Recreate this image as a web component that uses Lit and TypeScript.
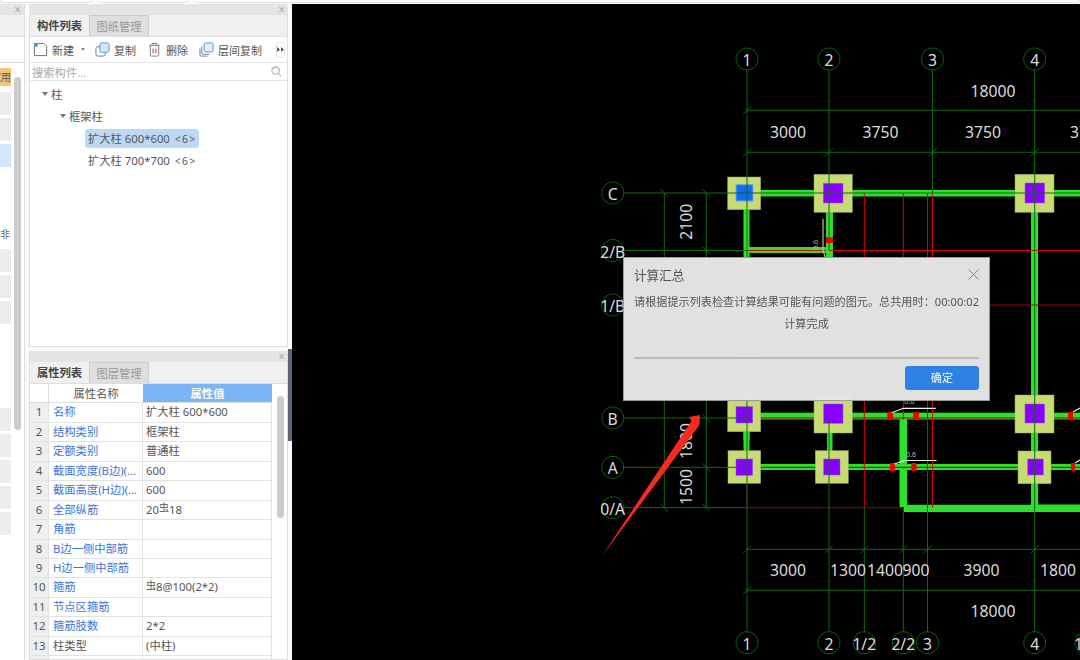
import { html, css, svg, LitElement } from "lit";
import { customElement } from "lit/decorators.js";

type Prop = { no: number, name: string, value: string, plain?: boolean };

const PROPS: Prop[] = [
  { no: 1, name: "名称", value: "扩大柱 600*600" },
  { no: 2, name: "结构类别", value: "框架柱" },
  { no: 3, name: "定额类别", value: "普通柱" },
  { no: 4, name: "截面宽度(B边)(mm)", value: "600" },
  { no: 5, name: "截面高度(H边)(mm)", value: "600" },
  { no: 6, name: "全部纵筋", value: "20|18" },
  { no: 7, name: "角筋", value: "" },
  { no: 8, name: "B边一侧中部筋", value: "" },
  { no: 9, name: "H边一侧中部筋", value: "" },
  { no: 10, name: "箍筋", value: "|8@100(2*2)" },
  { no: 11, name: "节点区箍筋", value: "" },
  { no: 12, name: "箍筋肢数", value: "2*2" },
  { no: 13, name: "柱类型", value: "(中柱)", plain: true },
  { no: 14, name: "", value: "" },
];

// grid positions, in page pixels (the svg viewBox uses the same numbers)
const X1 = 747, X2 = 829, X12 = 864.3, X22 = 903.3, X3L = 927.5, X3 = 932.5, X4 = 1034.7;
const YC = 193, Y2B = 250.5, Y1B = 305, YB = 418, YA = 467.3, Y0A = 507.7;

const bubble = (x: number, y: number, label: string) => {
  const pts = Array.from({ length: 12 }, (_, i) => {
    const a = (i * Math.PI) / 6 + Math.PI / 12;
    return `${x + 11.2 * Math.cos(a)},${y + 11.2 * Math.sin(a)}`;
  }).join(" ");
  return svg`<polygon class="bubble" points=${pts}></polygon><text class="dim" x=${x} y=${y + 1}>${label}</text>`;
};

const line = (cls: string, x1: number, y1: number, x2: number, y2: number) =>
  svg`<line class=${cls} x1=${x1} y1=${y1} x2=${x2} y2=${y2}></line>`;

const rect = (cls: string, x1: number, y1: number, x2: number, y2: number) =>
  svg`<rect class=${cls} x=${x1} y=${y1} width=${x2 - x1} height=${y2 - y1}></rect>`;

const tick = (x: number, y: number, back = false) =>
  back ? line("grid", x - 4, y - 4, x + 4, y + 4) : line("grid", x - 4, y + 4, x + 4, y - 4);

const label = (x: number, y: number, t: string) => svg`<text class="dim" x=${x} y=${y}>${t}</text>`;

const vlabel = (x: number, y: number, t: string) =>
  svg`<text class="dim" x=${x} y=${y} transform="rotate(-90 ${x} ${y})">${t}</text>`;

const column = (px1: number, py1: number, px2: number, py2: number, x1: number, y1: number, x2: number, y2: number, cls = "purple") =>
  svg`${rect("pale", px1, py1, px2, py2)}${rect(cls, x1, y1, x2, y2)}`;

const leader = (x1: number, y1: number, x2: number, y2: number, x3: number) =>
  svg`<polyline class="leader" points="${x1},${y1} ${x2},${y2} ${x3},${y2}"></polyline>
    <text class="tiny" x=${x2 + 6} y=${y2 - 4}>0.6</text>`;

function drawing() {
  return svg`
    <svg class="plan" viewBox="292 4 788 656" width="788" height="656">
      <!-- beams -->
      ${rect("beam", 750, 190, 1080, 196.5)}
      ${rect("beam", 743.5, 209, 749.5, 440)}
      ${rect("beam", 749, 247, 826, 253)}
      ${rect("beam", 826, 211, 833, 262)}
      ${rect("beam", 1031, 211, 1038, 510)}
      ${rect("beam", 827, 400, 832.5, 470)}
      ${rect("beam", 743.5, 420, 749.5, 470)}
      ${rect("beam", 750, 412.7, 1080, 419.5)}
      ${rect("beam", 750, 464, 1080, 470)}
      ${rect("beam", 899.5, 419, 907, 507)}
      ${rect("beam", 904, 504.5, 1080, 512)}
      ${rect("cut", 907, 470, 1031, 504.5)}

      <!-- red reference lines -->
      ${line("red", X2, Y2B, 1080, Y2B)}
      ${line("red-dim", 840, Y1B, 1080, Y1B)}
      ${line("red-dim", X1, YB, 1080, YB)}
      ${line("red-dim", X1, YA, 1080, YA)}
      ${line("red-dim", X1, Y0A, X22, Y0A)}
      ${line("red-dim", X1, YA, X1, Y0A)}
      ${line("red", X12, YC, X12, Y0A)}
      ${line("red", X22, YC, X22, 420)}
      ${line("red", X3L, YC, X3L, Y0A)}
      ${line("red", X3, YC, X3, Y0A)}
      ${line("red", X1, Y2B, 826, Y2B)}

      <!-- columns -->
      ${column(727.7, 177, 760.7, 209.7, 736, 184.7, 753, 201, "blue")}
      ${column(814, 174.3, 852.3, 212.3, 823.3, 183.3, 843, 203)}
      ${column(1015, 174.3, 1054, 212.3, 1025, 183, 1044.6, 203)}
      ${column(727.7, 399, 760.7, 431.7, 736, 406.7, 752.7, 423)}
      ${column(814, 395, 852.3, 433, 823.7, 404, 843, 423.3)}
      ${column(1015, 395, 1054, 433, 1025, 404, 1044.6, 423)}
      ${column(728, 450.7, 760.7, 483.3, 736, 459, 752.7, 475.3)}
      ${column(815.3, 450.7, 848.3, 483.3, 823.7, 459, 840, 475)}
      ${column(1018, 451, 1051, 483.7, 1027.7, 459, 1043.3, 475)}

      <!-- axes -->
      ${line("grid", X1, 70, X1, 632)}
      ${line("grid", X2, 70, X2, 250)}
      ${line("grid", X2, 420, X2, 632)}
      ${line("grid", X3, 70, X3, YC)}
      ${line("grid", X4, 70, X4, 632)}
      ${line("grid", X12, Y0A, X12, 632)}
      ${line("grid", X22, Y0A, X22, 632)}
      ${line("grid", X3L, Y0A, X3L, 632)}
      ${line("grid", 624, YC, 1080, YC)}
      ${line("grid", 624, Y2B, X1, Y2B)}
      ${line("grid", 624, Y1B, X1, Y1B)}
      ${line("grid", 624, YB, X1, YB)}
      ${line("grid", 624, YA, X1, YA)}
      ${line("grid", 624, Y0A, X1, Y0A)}
      ${line("grid", 664.3, YC, 664.3, Y0A)}
      ${line("grid", 706.3, YC, 706.3, Y0A)}
      ${line("grid", X1, 110.3, 1080, 110.3)}
      ${line("grid", X1, 152.3, 1080, 152.3)}
      ${line("grid", X1, 549.3, 1080, 549.3)}
      ${line("grid", X1, 590.3, 1080, 590.3)}
      ${tick(X1, 110.3)}
      ${[X1, X2, X3, X4].map((x) => tick(x, 152.3))}
      ${[X1, X2, X12, X22, X3L, X4].map((x) => tick(x, 549.3))}
      ${tick(X1, 590.3)}
      ${[YC, Y0A].map((y) => tick(664.3, y, true))}
      ${[YC, Y2B, YB, YA, Y0A].map((y) => tick(706.3, y, true))}

      <!-- steel markers -->
      ${rect("mark", 826, 237.3, 833, 243)}
      ${rect("mark", 887.3, 412, 893, 420)}
      ${rect("mark", 913.3, 412, 919, 420)}
      ${rect("mark", 890, 463, 895, 471)}
      ${rect("mark", 911.3, 463, 916.5, 471)}
      ${rect("mark", 1068, 412, 1073, 420)}
      ${rect("mark", 1071, 463, 1075, 471)}
      ${leader(891.7, 412.7, 903.3, 408.3, 935.7)}
      ${leader(894.3, 464, 905, 460.5, 936.5)}
      <polyline class="leader" points="1073,412 1080,408"></polyline>
      <polyline class="leader" points="1075,463 1080,460"></polyline>
      <polyline class="leader-grey" points="823,218.7 823,250 825,257"></polyline>
      <text class="tiny" x="818" y="245" transform="rotate(-90 818 245)">0.6</text>

      <!-- labels -->
      ${bubble(X1, 59, "1")}${bubble(X2, 59, "2")}${bubble(X3, 59, "3")}${bubble(X4, 59, "4")}
      ${bubble(612.7, YC, "C")}${bubble(612.7, Y2B, "2/B")}${bubble(612.7, Y1B, "1/B")}
      ${bubble(612.7, YB, "B")}${bubble(612.7, YA, "A")}${bubble(612.7, Y0A, "0/A")}
      ${bubble(X1, 642.7, "1")}${bubble(X2, 642.7, "2")}${bubble(X12, 642.7, "1/2")}
      ${bubble(X22, 642.7, "2/2")}${bubble(X3L, 642.7, "3")}${bubble(X4, 642.7, "4")}${bubble(1086, 642.7, "1/3")}
      ${label(993, 91, "18000")}
      ${label(788, 132, "3000")}${label(880.5, 132, "3750")}${label(983, 132, "3750")}${label(1088, 132, "3750")}
      ${label(788, 570, "3000")}${label(848, 570, "1300")}${label(885, 570, "1400")}${label(916, 570, "900")}
      ${label(981.5, 570, "3900")}${label(1058, 570, "1800")}
      ${label(993, 611, "18000")}
      ${vlabel(686, 221.7, "2100")}${vlabel(686, 441, "1800")}${vlabel(686, 487, "1500")}

      <polygon class="arrow" points="700,415 689,417 691.5,421 602,556 698,427 699.5,424"></polygon>
    </svg>
  `;
}

const icon_new = html`<svg class="ico" viewBox="0 0 16 16" width="15" height="15">
  <path d="M5 1.5h6.5l3 3v10h-13V5" fill="none" stroke="#666" stroke-width="1"/><rect x="1" y="1" width="4" height="4" fill="#4a90e2"/></svg>`;
const icon_copy = html`<svg class="ico" viewBox="0 0 16 16" width="15" height="15">
  <rect x="1" y="5" width="10" height="10" rx="2" fill="#fff" stroke="#777"/><rect x="5" y="1" width="10" height="10" rx="2" fill="#d6e8fb" stroke="#4a90e2"/></svg>`;
const icon_del = html`<svg class="ico" viewBox="0 0 16 16" width="15" height="15">
  <path d="M2.5 3.5h11M5.5 3.5v-2h5v2M3.5 3.5v10.5a1 1 0 0 0 1 1h7a1 1 0 0 0 1-1V3.5" fill="none" stroke="#777"/><path d="M6.5 7v5M9.5 7v5" stroke="#e5484d" stroke-width="1.2"/></svg>`;
const icon_floor = html`<svg class="ico" viewBox="0 0 16 16" width="15" height="15">
  <path d="M1 7v7a1 1 0 0 0 1 1h7M3 5v7a1 1 0 0 0 1 1h7" fill="none" stroke="#777"/><rect x="5.5" y="1" width="9.5" height="9.5" rx="1.5" fill="#e3effc" stroke="#4a90e2"/></svg>`;

@customElement("app-root")
export class AppRoot extends LitElement {
  static styles = css`
    :host {
      display: block;
      width: 1080px;
      height: 660px;
      overflow: hidden;
      font-family: "Noto Sans", "Noto Sans CJK SC", sans-serif;
      font-size: 11.3px;
      color: #555;
    }

    .top { height: 4px; background: #fff; display: flex; gap: 4px; }
    .top i { height: 2px; border: 1px solid #e2e2e2; border-top: 0; border-radius: 0 0 4px 4px; }
    .top i:nth-child(1) { width: 91px; }
    .top i:nth-child(2) { width: 90px; }
    .top i:nth-child(3) { width: 885px; }

    .main { height: 656px; display: flex; background: #fafafa; }

    .side { width: 25px; flex: none; box-sizing: border-box; border-right: 1px solid #ddd; background: #fff; position: relative; overflow: hidden; }
    .bar { height: 11px; background: #e4e4e4; display: flex; justify-content: flex-end; align-items: center; color: #aaa; font-size: 12px; line-height: 11px; }
    .side .bar { padding-right: 3px; }
    .side .tabs { height: 21px; background: #f0f0f0; border-bottom: 1px solid #ddd; }
    .side .tools { height: 25px; border-bottom: 1px solid #ddd; }
    .tiles { padding-top: 5px; display: flex; flex-direction: column; gap: 3px; width: 11px; }
    .tile { height: 23px; background: #ececec; flex: none; }
    .tile.on { height: 18px; margin-bottom: 3px; background: #f3c677; color: #555; font-size: 10px; line-height: 18px; display: flex; justify-content: flex-end; overflow: hidden; white-space: nowrap; }
    .tile.sel { background: #d2e6fc; }
    .clip { height: 12px; margin: 58px 0 6px; font-size: 10px; line-height: 12px; white-space: nowrap; overflow: hidden; color: #666; }
    .gap { height: 78px; flex: none; }
    .thumb { position: absolute; left: 14px; top: 73px; width: 7px; height: 353px; border-radius: 4px; background: #ccc; }

    .mid { width: 259px; margin: 0 4px; flex: none; display: flex; flex-direction: column; gap: 4px; position: relative; }
    .panel { box-sizing: border-box; border: 1px solid #ddd; border-top: 0; background: #fff; display: flex; flex-direction: column; }
    .panel.one { height: 343px; }
    .panel.two { height: 309px; overflow: hidden; position: relative; }
    .panel .bar { padding-right: 3px; margin: 0 -1px; }

    .tabs { display: flex; height: 21px; background: #f0f0f0; border-bottom: 1px solid #ddd; flex: none; }
    .tab { width: 59px; box-sizing: border-box; text-align: center; line-height: 21px; font-size: 11.3px; color: #444; font-weight: 700; }
    .tab.off { width: 60px; background: #dedede; color: #999; font-weight: 400; border: 1px solid #ccc; border-bottom: 0; }

    .tools { height: 25px; flex: none; display: flex; align-items: center; border-bottom: 1px solid #e4e4e4; padding-left: 3px; white-space: nowrap; font-size: 11px; }
    .tool { display: flex; align-items: center; gap: 4px; }
    .tool.n2 { margin-left: 10px; }
    .tool.n3 { margin-left: 11px; }
    .tool.n4 { margin-left: 11px; }
    .caret { width: 0; height: 0; margin-left: 7px; border: 2.5px solid transparent; border-top: 3px solid #888; border-bottom: 0; }
    .more { margin-left: 14px; width: 9px; height: 16px; border: 1px solid #e4e4e4; border-radius: 3px; box-sizing: border-box; display: flex; align-items: center; justify-content: center; }
    .ico { flex: none; }

    .search { height: 17px; flex: none; display: flex; align-items: center; justify-content: space-between; padding: 0 5px 0 2px; border-bottom: 1px solid #e4e4e4; color: #aaa; }

    .tree { padding-top: 2px; }
    .node { height: 22px; display: flex; align-items: center; }
    .node.l1 { padding-left: 12px; }
    .node.l2 { padding-left: 30px; }
    .node.l3 { padding-left: 55px; }
    .tri { width: 0; height: 0; margin-right: 3px; border: 3px solid transparent; border-top: 4px solid #777; border-bottom: 0; }
    .leaf { height: 19px; line-height: 19px; padding: 0 5px 0 3px; width: 106px; border-radius: 3px; white-space: nowrap; }
    .leaf.sel { background: #bcd8f5; }
    .leaf span { margin-left: 5px; letter-spacing: 1.2px; font-size: 10.5px; }

    .table { display: grid; grid-template-columns: 19px 94px 129px; grid-auto-rows: 19.44px; width: 242px; }
    .head { height: 19px; line-height: 19px; text-align: center; border-bottom: 1px solid #ddd; box-sizing: border-box; }
    .head.no { border-right: 1px solid #ddd; }
    .head.val { background: #7ab6f5; color: #fff; font-weight: 700; }
    .cell { box-sizing: border-box; border-bottom: 1px solid #e2e2e2; border-right: 1px solid #e2e2e2; line-height: 18.5px; padding-left: 3px; overflow: hidden; white-space: nowrap; text-overflow: ellipsis; }
    .no { background: #eee; padding: 0; text-align: center; color: #555; font-size: 11.5px; }
    .head.no { background: #fff; }
    .name { color: #3b74e0; padding-left: 4px; }
    .name.plain { color: #555; }
    .grade { font-size: 10px; line-height: 10px; position: relative; top: -2.5px; }
    .thumb2 { position: absolute; left: 247px; top: 45px; width: 7px; height: 122px; border-radius: 4px; background: #ccc; }
    .handle { position: absolute; left: 259px; top: 345px; width: 4px; height: 92px; background: #5b6470; }

    .canvas { flex: 1; position: relative; background: #000; overflow: hidden; }
    .plan { display: block; }
    .bubble { fill: none; stroke: #0b5f0b; stroke-width: 1; }
    .dim { fill: #dcdcdc; font-size: 15.7px; text-anchor: middle; dominant-baseline: central; font-family: "Noto Sans", sans-serif; }
    .tiny { fill: #bbb; font-size: 7px; text-anchor: middle; font-family: "Noto Sans", sans-serif; }
    .grid { stroke: #0e6a0e; stroke-width: 1; }
    .red { stroke: #e00000; stroke-width: 1; }
    .red-dim { stroke: #a30000; stroke-width: 1; }
    .beam { fill: #2ce02c; }
    .cut { fill: #000; }
    .pale { fill: #c6dc72; stroke: #9aa866; stroke-width: .5; }
    .purple { fill: #8800ff; stroke: #9c55d8; stroke-width: .5; }
    .blue { fill: #0f6cf5; stroke: #6aa5f5; stroke-width: 1; }
    .mark { fill: #f00000; }
    .leader { fill: none; stroke: #f0f0f0; stroke-width: 1.2; }
    .leader-grey { fill: none; stroke: #bbb; stroke-width: 1.2; }
    .arrow { fill: #fa2a1e; }

    .dialog {
      position: absolute;
      left: 331px;
      top: 252.7px;
      width: 367px;
      height: 144px;
      box-sizing: border-box;
      border: 1px solid #9a9a9a;
      padding: 9px 10px 10px;
      display: flex;
      flex-direction: column;
      background: rgba(232, 232, 232, .97);
      backdrop-filter: blur(14px);
      color: #555;
    }
    .title { display: flex; justify-content: space-between; align-items: center; height: 16px; font-size: 12.6px; }
    .msg { margin-top: 10px; font-size: 11.15px; line-height: 17px; white-space: nowrap; }
    .msg.done { margin-top: 5px; text-align: center; }
    .rule { margin-top: auto; height: 2px; background: #bbb; }
    .actions { display: flex; justify-content: flex-end; margin-top: 7px; }
    .ok { width: 74px; height: 24px; border-radius: 3px; background: #2d82e6; color: #fff; text-align: center; line-height: 24px; font-size: 11.15px; }
  `;

  private renderValue(value: string) {
    if (!value.includes("|")) return value;
    // the grade mark of the rebar sits raised, like the font the software uses
    const [before, after] = value.split("|");
    return html`${before}<span class="grade">虫</span>${after}`;
  }

  private renderSide() {
    return html`
      <div class="side">
        <div class="bar">×</div>
        <div class="tabs"></div>
        <div class="tools"></div>
        <div class="tiles">
          <div class="tile on">试用</div>
          <div class="tile"></div>
          <div class="tile"></div>
          <div class="tile sel"></div>
          <div class="clip">非...</div>
          <div class="tile"></div>
          <div class="tile"></div>
          <div class="tile"></div>
          <div class="gap"></div>
          <div class="tile"></div>
          <div class="tile"></div>
          <div class="tile"></div>
          <div class="tile"></div>
          <div class="tile"></div>
        </div>
        <div class="thumb"></div>
      </div>
    `;
  }

  private renderList() {
    return html`
      <div class="panel one">
        <div class="bar">×</div>
        <div class="tabs">
          <div class="tab">构件列表</div>
          <div class="tab off">图纸管理</div>
        </div>
        <div class="tools">
          <div class="tool">${icon_new}新建</div>
          <div class="caret"></div>
          <div class="tool n2">${icon_copy}复制</div>
          <div class="tool n3">${icon_del}删除</div>
          <div class="tool n4">${icon_floor}层间复制</div>
          <div class="more">
            <svg viewBox="0 0 7 5" width="7" height="5"><path d="M0 0l3 2.5L0 5zM4 0l3 2.5L4 5z" fill="#555"/></svg>
          </div>
        </div>
        <div class="search">
          <span>搜索构件...</span>
          <svg viewBox="0 0 12 12" width="11" height="11"><circle cx="5" cy="5" r="4" fill="none" stroke="#aaa" stroke-width="1.2"/><path d="M8 8l3 3" stroke="#aaa" stroke-width="1.2"/></svg>
        </div>
        <div class="tree">
          <div class="node l1"><i class="tri"></i>柱</div>
          <div class="node l2"><i class="tri"></i>框架柱</div>
          <div class="node l3"><div class="leaf sel">扩大柱 600*600<span>&lt;6&gt;</span></div></div>
          <div class="node l3"><div class="leaf">扩大柱 700*700<span>&lt;6&gt;</span></div></div>
        </div>
      </div>
    `;
  }

  private renderProps() {
    return html`
      <div class="panel two">
        <div class="bar">×</div>
        <div class="tabs">
          <div class="tab">属性列表</div>
          <div class="tab off">图层管理</div>
        </div>
        <div class="table">
          <div class="head no"></div>
          <div class="head">属性名称</div>
          <div class="head val">属性值</div>
          ${PROPS.map((p) => html`
            <div class="cell no">${p.no}</div>
            <div class="cell name ${p.plain ? "plain" : ""}">${p.name}</div>
            <div class="cell">${this.renderValue(p.value)}</div>
          `)}
        </div>
        <div class="thumb2"></div>
      </div>
    `;
  }

  protected render() {
    return html`
      <div class="top"><i></i><i></i><i></i></div>
      <div class="main">
        ${this.renderSide()}
        <div class="mid">
          ${this.renderList()}
          ${this.renderProps()}
          <div class="handle"></div>
        </div>
        <div class="canvas">
          ${drawing()}
          <div class="dialog">
            <div class="title">
              <span>计算汇总</span>
              <svg viewBox="0 0 11 11" width="11" height="11"><path d="M.5.5l10 10M10.5.5l-10 10" stroke="#888" stroke-width="1"/></svg>
            </div>
            <div class="msg">请根据提示列表检查计算结果可能有问题的图元。总共用时：00:00:02</div>
            <div class="msg done">计算完成</div>
            <div class="rule"></div>
            <div class="actions"><div class="ok">确定</div></div>
          </div>
        </div>
      </div>
    `;
  }
}
